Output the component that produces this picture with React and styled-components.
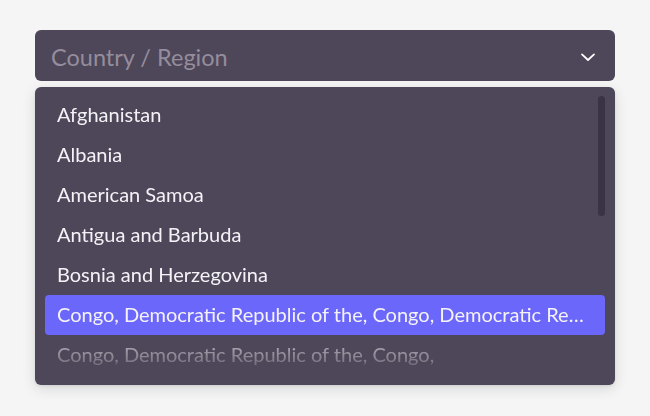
import React, { useState } from 'react';
import styled, { createGlobalStyle } from 'styled-components';

const GlobalStyle = createGlobalStyle`
  html, body {
    margin: 0;
    padding: 0;
    background: #f5f5f5;
    font-family: Lato, "Open Sans", sans-serif;
  }
`;

const Page = styled.div`
  width: 650px;
  height: 416px;
  box-sizing: border-box;
  padding: 30px 35px 0 35px;
  display: flex;
  flex-direction: column;
  gap: 6px;
`;

const Trigger = styled.button`
  height: 51px;
  border: none;
  border-radius: 6px;
  background: #4e4659;
  display: flex;
  align-items: center;
  justify-content: space-between;
  padding: 2px 18px 0 16px;
  font-family: inherit;
  cursor: pointer;
`;

const Placeholder = styled.span`
  font-size: 23.5px;
  color: #948d9c;
`;

const Menu = styled.div`
  position: relative;
  height: 298px;
  border-radius: 6px;
  background: #4e4659;
  box-shadow: 0 4px 14px rgba(0, 0, 0, 0.12), 0 1px 3px rgba(0, 0, 0, 0.08);
  overflow: hidden;
`;

const List = styled.ul`
  list-style: none;
  margin: 0;
  padding: 8px 10px;
  height: 100%;
  box-sizing: border-box;
  overflow: hidden;
  -webkit-mask-image: linear-gradient(to bottom, #000 0, #000 252px, rgba(0,0,0,0.5) 262px, rgba(0,0,0,0) 292px);
  mask-image: linear-gradient(to bottom, #000 0, #000 252px, rgba(0,0,0,0.5) 262px, rgba(0,0,0,0) 292px);
`;

const Option = styled.li`
  height: 40px;
  box-sizing: border-box;
  display: flex;
  align-items: center;
  padding: 0 12px 2px 12px;
  border-radius: 4px;
  font-size: 20px;
  color: #f4f2f6;
  background: ${p => (p.$active ? '#6c67fb' : 'transparent')};
  white-space: nowrap;
  overflow: hidden;

  span {
    overflow: hidden;
    text-overflow: ellipsis;
  }
`;

const ScrollThumb = styled.div`
  position: absolute;
  top: 9px;
  right: 10px;
  width: 7px;
  height: 120px;
  border-radius: 4px;
  background: #3a3245;
`;

const countries = [
  'Afghanistan',
  'Albania',
  'American Samoa',
  'Antigua and Barbuda',
  'Bosnia and Herzegovina',
  'Congo, Democratic Republic of the, Congo, Democratic Republic of the',
  'Congo, Democratic Republic of the, Congo,',
];

const Chevron = () => (
  <svg width="18" height="18" viewBox="0 0 24 24" fill="none" stroke="#ffffff" strokeWidth="2.4" strokeLinecap="round" strokeLinejoin="round">
    <polyline points="4 8.5 12 16 20 8.5" />
  </svg>
);

export default function App() {
  const [active] = useState(5);
  return (
    <>
      <GlobalStyle />
      <Page>
        <Trigger>
          <Placeholder>Country / Region</Placeholder>
          <Chevron />
        </Trigger>
        <Menu>
          <List>
            {countries.map((c, i) => (
              <Option key={c} $active={i === active}>
                <span>{c}</span>
              </Option>
            ))}
          </List>
          <ScrollThumb />
        </Menu>
      </Page>
    </>
  );
}
